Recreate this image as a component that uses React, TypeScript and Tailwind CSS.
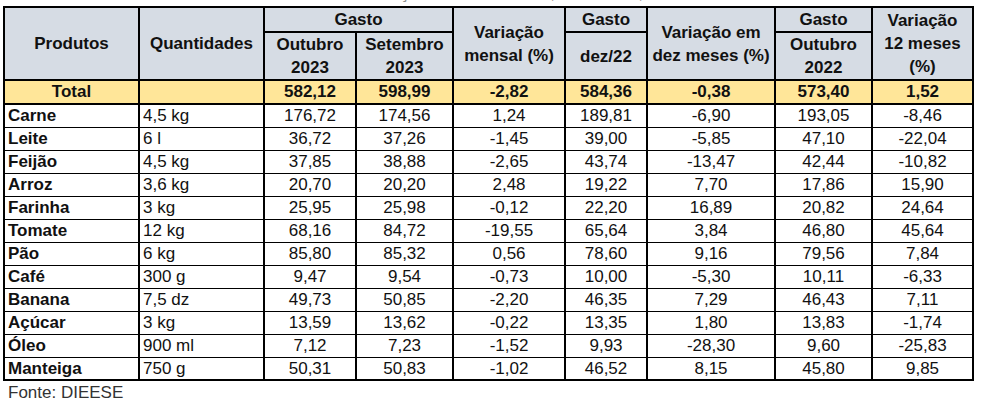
import React from "react";

type Row = {
  name: string;
  qty: string;
  values: string[];
};

const rows: Row[] = [
  { name: "Carne", qty: "4,5 kg", values: ["176,72", "174,56", "1,24", "189,81", "-6,90", "193,05", "-8,46"] },
  { name: "Leite", qty: "6 l", values: ["36,72", "37,26", "-1,45", "39,00", "-5,85", "47,10", "-22,04"] },
  { name: "Feijão", qty: "4,5 kg", values: ["37,85", "38,88", "-2,65", "43,74", "-13,47", "42,44", "-10,82"] },
  { name: "Arroz", qty: "3,6 kg", values: ["20,70", "20,20", "2,48", "19,22", "7,70", "17,86", "15,90"] },
  { name: "Farinha", qty: "3 kg", values: ["25,95", "25,98", "-0,12", "22,20", "16,89", "20,82", "24,64"] },
  { name: "Tomate", qty: "12 kg", values: ["68,16", "84,72", "-19,55", "65,64", "3,84", "46,80", "45,64"] },
  { name: "Pão", qty: "6 kg", values: ["85,80", "85,32", "0,56", "78,60", "9,16", "79,56", "7,84"] },
  { name: "Café", qty: "300 g", values: ["9,47", "9,54", "-0,73", "10,00", "-5,30", "10,11", "-6,33"] },
  { name: "Banana", qty: "7,5 dz", values: ["49,73", "50,85", "-2,20", "46,35", "7,29", "46,43", "7,11"] },
  { name: "Açúcar", qty: "3 kg", values: ["13,59", "13,62", "-0,22", "13,35", "1,80", "13,83", "-1,74"] },
  { name: "Óleo", qty: "900 ml", values: ["7,12", "7,23", "-1,52", "9,93", "-28,30", "9,60", "-25,83"] },
  { name: "Manteiga", qty: "750 g", values: ["50,31", "50,83", "-1,02", "46,52", "8,15", "45,80", "9,85"] },
];

const totals = ["582,12", "598,99", "-2,82", "584,36", "-0,38", "573,40", "1,52"];

const colWidths = [135, 125, 92, 97, 112, 82, 128, 97, 101];

const th = "border-2 border-black bg-[#d6dce4] font-bold text-center align-middle leading-[23px] p-0";

export default function App() {
  return (
    <div className="w-[984px] h-[412px] bg-white overflow-hidden font-['Liberation_Sans',Arial,sans-serif] text-[17px] text-[#111]">
      {/* caption of the page above, mostly scrolled off */}
      <div className="h-[6px] overflow-hidden flex justify-center pl-[90px]">
        <div className="-mt-[16px] text-[17px] italic text-[#8a8a8a] leading-[20px] whitespace-nowrap">
          Custo e variação da cesta básica, São Paulo, outubro de 2023
        </div>
      </div>

      <table className="ml-[3px] w-[969px] table-fixed border-collapse border-2 border-black">
        <colgroup>
          {colWidths.map((w, i) => (
            <col key={i} style={{ width: w }} />
          ))}
        </colgroup>
        <thead>
          <tr className="h-[25px]">
            <th rowSpan={2} className={th}>Produtos</th>
            <th rowSpan={2} className={th}>Quantidades</th>
            <th colSpan={2} className={th}>Gasto</th>
            <th rowSpan={2} className={th}>Variação<br />mensal (%)</th>
            <th className={th}>Gasto</th>
            <th rowSpan={2} className={th}>Variação em<br />dez meses (%)</th>
            <th className={th}>Gasto</th>
            <th rowSpan={2} className={th}>Variação<br />12 meses<br />(%)</th>
          </tr>
          <tr className="h-[46px]">
            <th className={th}>Outubro<br />2023</th>
            <th className={th}>Setembro<br />2023</th>
            <th className={th}>dez/22</th>
            <th className={th}>Outubro<br />2022</th>
          </tr>
        </thead>
        <tbody>
          <tr className="h-[24px] bg-[#ffe699] font-bold">
            <td className="border-2 border-black text-center p-0 leading-[20px]">Total</td>
            <td className="border-2 border-black p-0"></td>
            {totals.map((v, i) => (
              <td key={i} className="border-2 border-black text-center p-0 leading-[20px]">{v}</td>
            ))}
          </tr>
          {rows.map((r) => (
            <tr key={r.name} className="h-[23px]">
              <td className="border-x-2 border-y-[1.5px] border-black font-bold pl-[3px] py-0 leading-[19px]">{r.name}</td>
              <td className="border-x-2 border-y-[1.5px] border-black pl-[3px] py-0 leading-[19px]">{r.qty}</td>
              {r.values.map((v, i) => (
                <td key={i} className="border-x-2 border-y-[1.5px] border-black text-center p-0 leading-[19px]">{v}</td>
              ))}
            </tr>
          ))}
        </tbody>
      </table>

      <div className="pl-[8px] pt-[2px] text-[#333] leading-[20px]">Fonte: DIEESE</div>
    </div>
  );
}
